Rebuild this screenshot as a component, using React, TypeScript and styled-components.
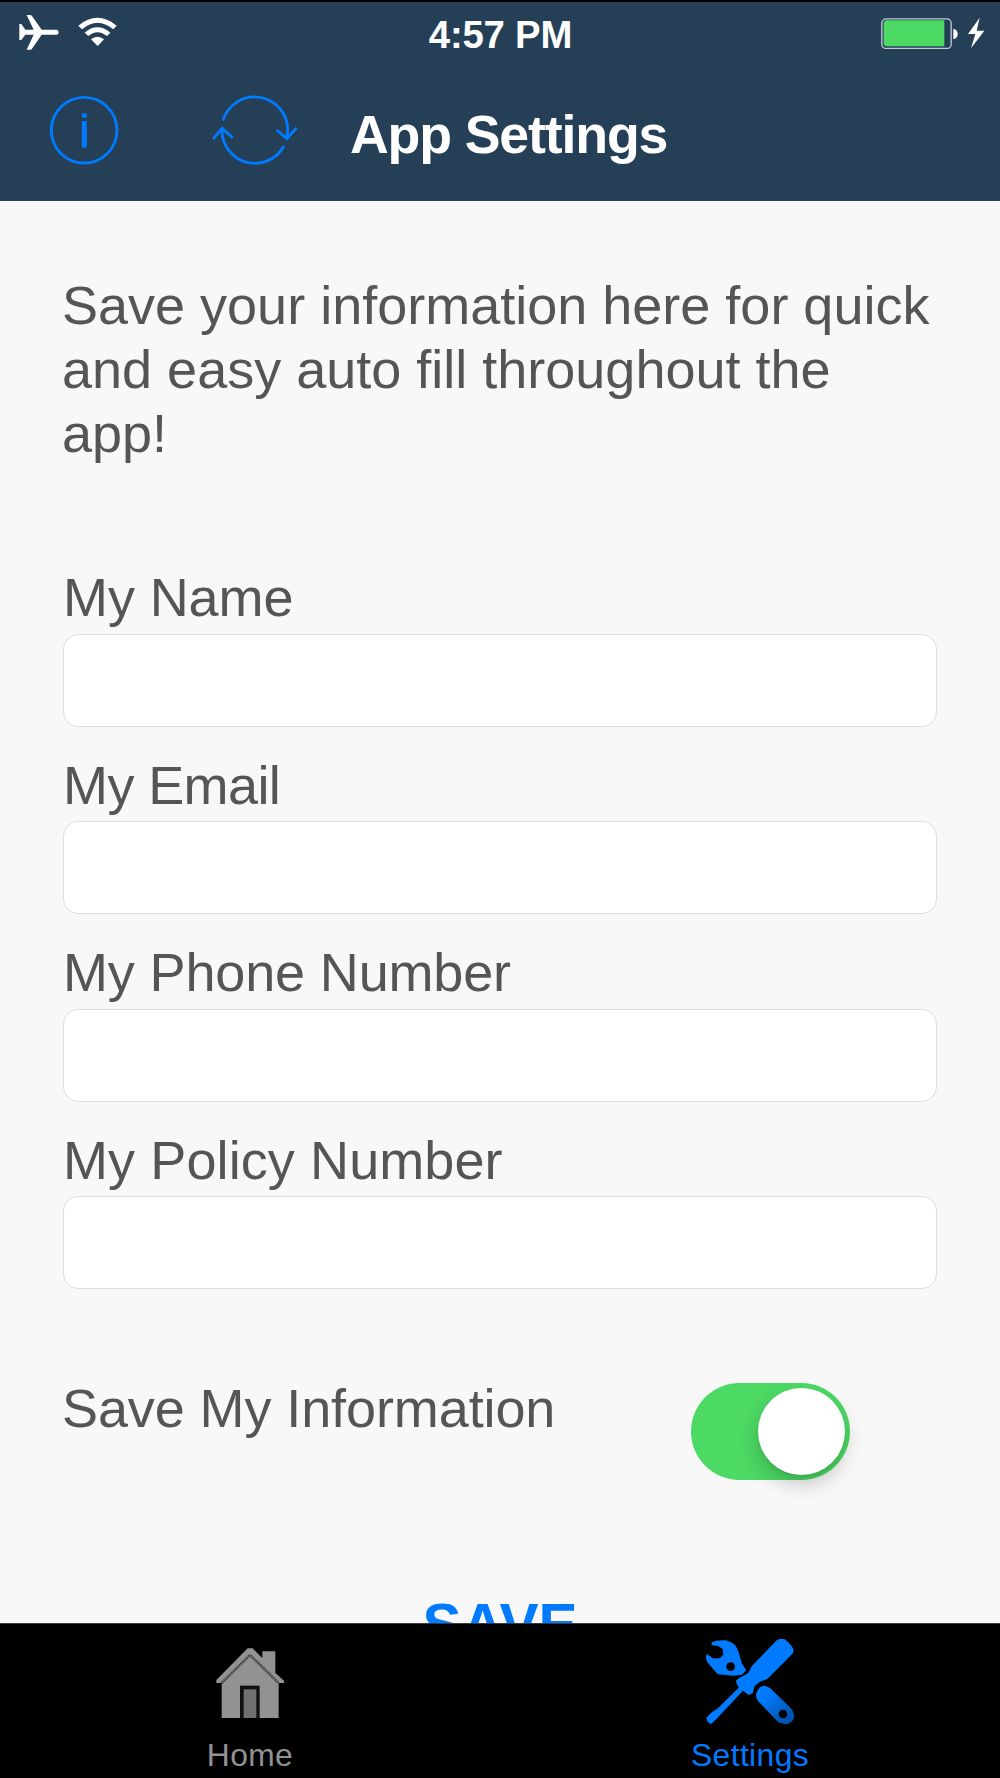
import React, { useState } from "react";
import styled, { createGlobalStyle } from "styled-components";

const GlobalStyle = createGlobalStyle`
  * { box-sizing: border-box; }
  body {
    margin: 0;
    background: #f8f8f8;
    font-family: "Liberation Sans", Arial, sans-serif;
    font-kerning: none;
  }
`;

const Screen = styled.div`
  width: 1000px;
  height: 1778px;
  display: flex;
  flex-direction: column;
  overflow: hidden;
  background: #f8f8f8;
`;

const Header = styled.header`
  flex: none;
  height: 201px;
  background: #253f56;
  border-top: 2px solid #000;
`;

const StatusBar = styled.div`
  height: 62px;
  display: grid;
  grid-template-columns: 1fr auto 1fr;
  align-items: start;
`;

const StatusLeft = styled.div`
  display: flex;
  gap: 18px;
  padding: 12px 0 0 19px;

  svg + svg { margin-top: 2px; }
`;

const Time = styled.div`
  padding: 11px 0 0 1px;
  color: #fff;
  font-size: 38.3px;
  line-height: 43px;
  font-weight: 700;
  letter-spacing: -0.2px;
`;

const StatusRight = styled.div`
  display: flex;
  justify-content: flex-end;
  gap: 1px;
  padding: 12.5px 12px 0 0;
`;

const NavBar = styled.div`
  display: flex;
  align-items: flex-start;
  padding: 30.5px 0 0 50px;
`;

const IconButton = styled.button<{ $gap: number }>`
  display: block;
  margin: 0 ${(p) => p.$gap}px 0 0;
  padding: 0;
  border: 0;
  background: none;
  svg { display: block; }
`;

const Title = styled.h1`
  margin: 9px 0 0;
  color: #fff;
  font-size: 53.7px;
  line-height: 60px;
  font-weight: 700;
  letter-spacing: -1.15px;
  white-space: nowrap;
`;

const Content = styled.main`
  flex: 1;
  min-height: 0;
  overflow: hidden;
  display: flex;
  flex-direction: column;
  padding: 73px 63px 0;

  > * { flex: none; }
`;

const Intro = styled.p`
  margin: 0 -10px 101px -1px;
  color: #555;
  font-size: 54px;
  line-height: 63.75px;
`;

const Field = styled.label`
  display: flex;
  flex-direction: column;
  height: 187.5px;
`;

const Label = styled.span<{ $tracking?: number }>`
  height: 67.5px;
  color: #555;
  font-size: 54px;
  line-height: 63.75px;
  letter-spacing: ${(p) => p.$tracking ?? 0}px;
  white-space: nowrap;
`;

const Input = styled.input`
  width: 874px;
  height: 93px;
  padding: 0 20px;
  border: 1px solid #dedede;
  border-radius: 15px;
  background: #fff;
  font: inherit;
  font-size: 53px;
  color: #555;
  outline: none;
`;

const SaveRow = styled.div`
  display: flex;
  justify-content: space-between;
  align-items: flex-start;
  padding: 61px 87px 0 0;
`;

const SaveLabel = styled(Label)`
  margin-left: -1px;
`;

const Switch = styled.button<{ $on: boolean }>`
  display: flex;
  justify-content: ${(p) => (p.$on ? "flex-end" : "flex-start")};
  width: 159px;
  height: 97px;
  margin-top: 6px;
  padding: 5px;
  border: 0;
  border-radius: 49px;
  background: ${(p) => (p.$on ? "#4cd964" : "#ddd")};
`;

const Knob = styled.span`
  width: 87px;
  height: 87px;
  border-radius: 50%;
  background: #fff;
  box-shadow: 0 9px 20px rgba(0, 0, 0, 0.2), 0 3px 3px rgba(0, 0, 0, 0.06);
`;

const SaveButton = styled.button`
  align-self: center;
  margin-top: 113px;
  padding: 0;
  border: 0;
  background: none;
  color: #007aff;
  font-family: inherit;
  font-size: 58.5px;
  line-height: 64px;
  font-weight: 700;
  font-kerning: normal;
`;

const TabBar = styled.nav`
  flex: none;
  height: 155px;
  display: grid;
  grid-template-columns: 1fr 1fr;
  background: #000;
  border-top: 1px solid #3a3a3a;
`;

const Tab = styled.a<{ $color: string; $top: number }>`
  display: flex;
  flex-direction: column;
  justify-content: space-between;
  align-items: center;
  padding: ${(p) => p.$top}px 0 5px;
  color: ${(p) => p.$color};
  font-size: 31.8px;
  line-height: 36px;
  letter-spacing: 0.4px;
`;

const Airplane = () => (
  <svg width="41" height="38" viewBox="57 42 123 114" fill="#fff">
    <path d="M80 45h10q4 0 6 3l29 41h44q7 0 7 7.500t-7 7.500h-44l-29 42q-2 3-6 3H80l21-45H76l-12 16h-6V72h6l12 17h25z" />
  </svg>
);

const Wifi = () => (
  <svg width="39" height="32" viewBox="234 48 117 96" fill="#fff">
    <path d="M235 77Q292 30 350 77l-10 11Q292 49 246 88z" />
    <path d="M254 98Q292 66 331 98l-10 10Q292 85 265 108z" />
    <path d="M273 118Q292 103 312 118l-19 20z" />
  </svg>
);

const Battery = () => (
  <svg width="78" height="34" viewBox="92 44 234 102">
    <rect x="94.500" y="55.500" width="208" height="89" rx="13" fill="none" stroke="#c4cad6" strokeWidth="4" />
    <path d="M110 60h172v78H110q-10 0-10-10V70q0-10 10-10z" fill="#4cd964" />
    <path d="M309 85q13 3 13 16t-13 16z" fill="#fff" />
  </svg>
);

const Bolt = () => (
  <svg width="28" height="34" viewBox="330 44 84 102" fill="#fff">
    <path d="M389 52l-35 49h22l-13 43 40-53h-23z" />
  </svg>
);

const InfoIcon = () => (
  <svg width="69" height="70" viewBox="150 283 207 210" fill="#007aff">
    <circle cx="252.500" cy="388.500" r="98.500" fill="none" stroke="#007aff" strokeWidth="8.500" />
    <rect x="245.500" y="338" width="15" height="13" />
    <rect x="245.500" y="361" width="15" height="80" />
  </svg>
);

const RefreshIcon = () => (
  <svg width="87" height="71" viewBox="636 281 261 213" fill="none" stroke="#007aff" strokeWidth="8.500">
    <path d="M669 358A99 99 0 0 1 863 388L861 410" />
    <path d="M830 386L861 412L890 379" />
    <path d="M852 434A99 99 0 0 1 666 383" />
    <path d="M639 413L666 381L698 409" />
  </svg>
);

const HomeIcon = () => (
  <svg width="70" height="72" viewBox="75 110 210 216">
    <path d="M173 114h15l29 29v-20h39v65l26 23v7h-16v105H95V218H79v-9z" fill="#929292" />
    <path d="M95 218L180 134L266 218" fill="none" stroke="#484848" strokeWidth="8" strokeDasharray="6 2" />
    <path d="M150 323v-97h59v97z" fill="#101010" />
    <path d="M161 323v-86h38v86z" fill="#707070" />
  </svg>
);

const ToolsIcon = () => (
  <svg width="90" height="87" viewBox="105 84 270 261">
    <defs>
      <linearGradient id="handle" x1="0" y1="0" x2="1" y2="1">
        <stop offset="0.25" stopColor="#007aff" />
        <stop offset="1" stopColor="#004a9c" />
      </linearGradient>
    </defs>
    <path
      d="M125 97Q142 89 168 91Q199 98 207 130L215 160L229 181L216 194L190 197L143 193L112 157Q105 143 110 132Q119 137 129 145L149 145L160 134L158 117L144 108L125 106z"
      fill="#007aff"
    />
    <circle cx="182" cy="170" r="13" fill="#000" />
    <path
      d="M320 91Q331 83 344 88Q362 101 371 119Q372 128 363 136L292 207L269 216L254 228L248 250L236 255L219 242L151 314L137 330L123 342Q110 337 109 323L125 307L142 296L206 233L197 213L206 205L234 190L245 169z"
      fill="#007aff"
    />
    <path
      d="M264 239Q271 226 286 227L301 235L362 294Q376 309 371 327Q363 342 347 342Q332 343 322 334L264 273Q252 257 264 239z"
      fill="url(#handle)"
    />
    <circle cx="339" cy="312" r="13" fill="#000" />
  </svg>
);

const FIELDS = [
  { name: "My Name", tracking: -0.1 },
  { name: "My Email", tracking: -0.6 },
  { name: "My Phone Number", tracking: -0.15 },
  { name: "My Policy Number", tracking: 0.1 },
];

export default function App() {
  const [on, setOn] = useState(true);
  return (
    <Screen>
      <GlobalStyle />
      <Header>
        <StatusBar>
          <StatusLeft>
            <Airplane />
            <Wifi />
          </StatusLeft>
          <Time>4:57 PM</Time>
          <StatusRight>
            <Battery />
            <Bolt />
          </StatusRight>
        </StatusBar>
        <NavBar>
          <IconButton $gap={93} aria-label="Info">
            <InfoIcon />
          </IconButton>
          <IconButton $gap={51} aria-label="Refresh">
            <RefreshIcon />
          </IconButton>
          <Title>App Settings</Title>
        </NavBar>
      </Header>
      <Content>
        <Intro>Save your information here for quick and easy auto fill throughout the app!</Intro>
        {FIELDS.map(({ name, tracking }) => (
          <Field key={name}>
            <Label $tracking={tracking}>{name}</Label>
            <Input type="text" />
          </Field>
        ))}
        <SaveRow>
          <SaveLabel $tracking={-0.1}>Save My Information</SaveLabel>
          <Switch $on={on} role="switch" aria-checked={on} onClick={() => setOn(!on)}>
            <Knob />
          </Switch>
        </SaveRow>
        <SaveButton>SAVE</SaveButton>
      </Content>
      <TabBar>
        <Tab $color="#929292" $top={23}>
          <HomeIcon />
          <span>Home</span>
        </Tab>
        <Tab $color="#007aff" $top={14}>
          <ToolsIcon />
          <span>Settings</span>
        </Tab>
      </TabBar>
    </Screen>
  );
}
